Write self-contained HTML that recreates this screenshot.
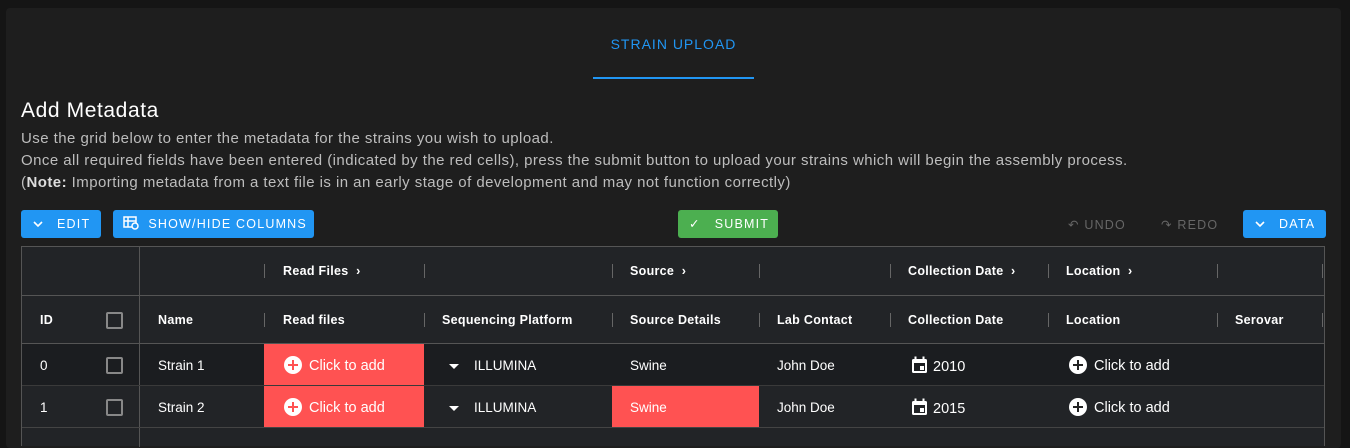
<!DOCTYPE html>
<html><head><style>
body{margin:0;width:1350px;height:442px;background:#151515;font-family:"Liberation Sans",sans-serif;overflow:hidden;position:relative}
.panel{position:absolute;left:6px;top:8px;width:1335px;height:440px;background:#1e1e1e;border-radius:4px}
.abs{position:absolute}
.tab{left:593px;top:36px;width:161px;text-align:center;color:#2196f3;font-size:14px;letter-spacing:1px}
.tabline{left:593px;top:77px;width:161px;height:2px;background:#2196f3}
h1{position:absolute;left:21px;top:99px;margin:0;font-weight:normal;color:#fff;font-size:21px;letter-spacing:0.6px}
.p{position:absolute;left:21px;color:#bdbdbd;font-size:15px;letter-spacing:0.45px}
.btn{position:absolute;top:210px;height:28px;background:#2196f3;border-radius:3px;color:#fff;font-size:12.5px;letter-spacing:1.2px;line-height:28px;box-sizing:border-box}
.table{position:absolute;left:21px;top:246px;width:1304px;height:200px;background:#222427;border:1px solid #555;border-bottom:none;box-sizing:border-box}
.hl{position:absolute;left:0;right:0;height:1px;background:#555}
.t{position:absolute;color:#fff;font-size:13.5px}
.b{font-weight:bold;font-size:12.5px;letter-spacing:0.3px}
.dv{position:absolute;width:1px;height:14px;background:#666}
.cb{position:absolute;width:13px;height:13px;border:2px solid #888;border-radius:2px}
.red{position:absolute;background:#ff5252}
.plus{display:inline-block;width:18px;height:18px;border-radius:50%;background:#fff;vertical-align:-4px;margin-right:7px;position:relative}
.plus:before{content:"";position:absolute;left:4px;top:8px;width:10px;height:2px;background:var(--c)}
.plus:after{content:"";position:absolute;left:8px;top:4px;width:2px;height:10px;background:var(--c)}
.cal{vertical-align:-3px;margin-right:5px}
</style></head><body>
<div class="panel"></div>
<div class="abs tab">STRAIN UPLOAD</div>
<div class="abs tabline"></div>
<h1>Add Metadata</h1>
<div class="p" style="top:130px">Use the grid below to enter the metadata for the strains you wish to upload.</div>
<div class="p" style="top:152px">Once all required fields have been entered (indicated by the red cells), press the submit button to upload your strains which will begin the assembly process.</div>
<div class="p" style="top:174px">(<b style="color:#ddd">Note:</b> Importing metadata from a text file is in an early stage of development and may not function correctly)</div>

<div class="btn" style="left:21px;width:80px;padding-left:12px"><svg width="10" height="8" viewBox="0 0 10 8"><path d="M1 2l4 4 4-4" fill="none" stroke="#fff" stroke-width="1.6"/></svg>&nbsp;&nbsp; EDIT</div>
<div class="btn" style="left:113px;width:201px;padding-left:10px"><svg width="16" height="14" style="vertical-align:-2px" viewBox="0 0 16 14" fill="none" stroke="#fff" stroke-width="1.5"><rect x="1" y="1" width="12" height="10"/><line x1="1" y1="5" x2="13" y2="5"/><line x1="5" y1="1" x2="5" y2="11"/><circle cx="12" cy="10" r="3" fill="#2196f3"/></svg>&nbsp; SHOW/HIDE COLUMNS</div>
<div class="btn" style="left:678px;width:100px;background:#4caf50;padding-left:11px">&#10003;&nbsp;&nbsp; SUBMIT</div>
<div class="abs" style="left:1068px;top:217px;color:#666;font-size:12.5px;letter-spacing:1.2px">&#8630; UNDO</div>
<div class="abs" style="left:1161px;top:217px;color:#666;font-size:12.5px;letter-spacing:1.2px">&#8631; REDO</div>
<div class="btn" style="left:1243px;width:83px;padding-left:12px"><svg width="10" height="8" viewBox="0 0 10 8"><path d="M1 2l4 4 4-4" fill="none" stroke="#fff" stroke-width="1.6"/></svg>&nbsp;&nbsp; DATA</div>

<div class="table">
 <div class="abs" style="left:0;top:96px;width:1302px;height:42px;background:#1b1d20"></div>
 <div class="abs" style="left:117px;top:0;width:1px;height:200px;background:#555"></div>
 <div class="hl" style="top:48px"></div><div class="hl" style="top:96px"></div>
 <div class="hl" style="top:138px;background:#3a3a3a"></div><div class="hl" style="top:180px;background:#444"></div>
 <div class="red" style="left:242px;top:97px;width:160px;height:41px"></div>
 <div class="red" style="left:242px;top:139px;width:160px;height:41px"></div>
 <div class="red" style="left:590px;top:139px;width:147px;height:41px"></div>
 <div class="dv" style="left:242px;top:17px"></div><div class="dv" style="left:402px;top:17px"></div><div class="dv" style="left:590px;top:17px"></div><div class="dv" style="left:737px;top:17px"></div><div class="dv" style="left:868px;top:17px"></div><div class="dv" style="left:1026px;top:17px"></div><div class="dv" style="left:1195px;top:17px"></div><div class="dv" style="left:1300px;top:17px"></div>
 <div class="dv" style="left:242px;top:66px"></div><div class="dv" style="left:402px;top:66px"></div><div class="dv" style="left:590px;top:66px"></div><div class="dv" style="left:737px;top:66px"></div><div class="dv" style="left:868px;top:66px"></div><div class="dv" style="left:1026px;top:66px"></div><div class="dv" style="left:1195px;top:66px"></div><div class="dv" style="left:1300px;top:66px"></div>
 <div class="t b" style="left:261px;top:17px">Read Files &nbsp;&#8250;</div>
 <div class="t b" style="left:608px;top:17px">Source &nbsp;&#8250;</div>
 <div class="t b" style="left:886px;top:17px">Collection Date &nbsp;&#8250;</div>
 <div class="t b" style="left:1044px;top:17px">Location &nbsp;&#8250;</div>
 <div class="t b" style="left:18px;top:66px">ID</div><div class="cb" style="left:84px;top:65px"></div>
 <div class="t b" style="left:136px;top:66px">Name</div><div class="t b" style="left:261px;top:66px">Read files</div>
 <div class="t b" style="left:420px;top:66px">Sequencing Platform</div><div class="t b" style="left:608px;top:66px">Source Details</div>
 <div class="t b" style="left:755px;top:66px">Lab Contact</div><div class="t b" style="left:886px;top:66px">Collection Date</div>
 <div class="t b" style="left:1044px;top:66px">Location</div><div class="t b" style="left:1213px;top:66px">Serovar</div>
 <!-- row 0 -->
 <div class="t" style="left:18px;top:111px">0</div><div class="cb" style="left:84px;top:110px"></div>
 <div class="t" style="left:136px;top:111px">Strain 1</div>
 <div class="t" style="left:262px;top:109px;font-size:14.5px;--c:#ff5252"><span class="plus"></span>Click to add</div>
 <div class="t" style="left:427px;top:111px"><svg width="10" height="6" viewBox="0 0 10 6"><path d="M0 0h10L5 5z" fill="#fff"/></svg>&nbsp;&nbsp;&nbsp; ILLUMINA</div>
 <div class="t" style="left:608px;top:111px">Swine</div><div class="t" style="left:755px;top:111px">John Doe</div>
 <div class="t" style="left:889px;top:109px;font-size:14.5px"><svg class="cal" width="17" height="18" viewBox="0 0 17 18"><rect x="1" y="3" width="15" height="14" rx="1.5" fill="#fff"/><rect x="3" y="7" width="11" height="8" fill="#1b1d20"/><rect x="3.5" y="0.5" width="2" height="4" fill="#fff"/><rect x="11.5" y="0.5" width="2" height="4" fill="#fff"/><rect x="9" y="10" width="4" height="4" fill="#fff"/></svg>2010</div>
 <div class="t" style="left:1047px;top:109px;font-size:14.5px;--c:#222"><span class="plus"></span>Click to add</div>
 <!-- row 1 -->
 <div class="t" style="left:18px;top:153px">1</div><div class="cb" style="left:84px;top:152px"></div>
 <div class="t" style="left:136px;top:153px">Strain 2</div>
 <div class="t" style="left:262px;top:151px;font-size:14.5px;--c:#ff5252"><span class="plus"></span>Click to add</div>
 <div class="t" style="left:427px;top:153px"><svg width="10" height="6" viewBox="0 0 10 6"><path d="M0 0h10L5 5z" fill="#fff"/></svg>&nbsp;&nbsp;&nbsp; ILLUMINA</div>
 <div class="t" style="left:608px;top:153px">Swine</div><div class="t" style="left:755px;top:153px">John Doe</div>
 <div class="t" style="left:889px;top:151px;font-size:14.5px"><svg class="cal" width="17" height="18" viewBox="0 0 17 18"><rect x="1" y="3" width="15" height="14" rx="1.5" fill="#fff"/><rect x="3" y="7" width="11" height="8" fill="#222427"/><rect x="3.5" y="0.5" width="2" height="4" fill="#fff"/><rect x="11.5" y="0.5" width="2" height="4" fill="#fff"/><rect x="9" y="10" width="4" height="4" fill="#fff"/></svg>2015</div>
 <div class="t" style="left:1047px;top:151px;font-size:14.5px;--c:#222"><span class="plus"></span>Click to add</div>
</div>
</body></html>
